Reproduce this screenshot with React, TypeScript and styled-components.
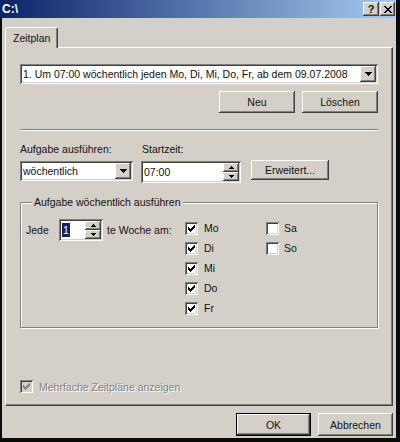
import styled, { createGlobalStyle, css } from 'styled-components';

const GlobalStyle = createGlobalStyle`
  html, body {
    margin: 0;
    padding: 0;
    background: #000;
  }
  body {
    font-family: "Liberation Sans", Arial, sans-serif;
    font-size: 10.5px;
    color: #111;
  }
  * {
    box-sizing: border-box;
  }
`;

const raised = css`
  background: #d4d0c8;
  box-shadow:
    inset -1px -1px #404040,
    inset 1px 1px #fff,
    inset -2px -2px #808080,
    inset 2px 2px #d4d0c8;
`;

const sunken = css`
  background: #fff;
  box-shadow:
    inset 1px 1px #808080,
    inset -1px -1px #fff,
    inset 2px 2px #404040,
    inset -2px -2px #d4d0c8;
`;

const CHECK_ROWS = [2, 3, 4, 3, 2, 1, 0];

const CheckMark = ({ color }: { color: string }) => (
  <svg width='7' height='7' viewBox='0 0 7 7' shapeRendering='crispEdges'>
    {CHECK_ROWS.map((y, x) => (
      <rect key={x} x={x} y={y} width='1' height='3' fill={color} />
    ))}
  </svg>
);

const DownArrow = () => (
  <svg width='7' height='4' viewBox='0 0 7 4' shapeRendering='crispEdges'>
    <rect x='0' y='0' width='7' height='1' fill='#000' />
    <rect x='1' y='1' width='5' height='1' fill='#000' />
    <rect x='2' y='2' width='3' height='1' fill='#000' />
    <rect x='3' y='3' width='1' height='1' fill='#000' />
  </svg>
);

const SpinArrow = ({ up }: { up?: boolean }) => (
  <svg
    width='5'
    height='3'
    viewBox='0 0 5 3'
    shapeRendering='crispEdges'
    style={up ? undefined : { transform: 'scaleY(-1)' }}
  >
    <rect x='2' y='0' width='1' height='1' fill='#000' />
    <rect x='1' y='1' width='3' height='1' fill='#000' />
    <rect x='0' y='2' width='5' height='1' fill='#000' />
  </svg>
);

const CloseGlyph = () => (
  <svg width='8' height='7' viewBox='0 0 8 7' shapeRendering='crispEdges'>
    <path d='M0 0h2v1h-2zM6 0h2v1h-2zM1 1h2v1h-2zM5 1h2v1h-2zM2 2h4v1h-4zM3 3h2v1h-2zM2 4h4v1h-4zM1 5h2v1h-2zM5 5h2v1h-2zM0 6h2v1h-2zM6 6h2v1h-2z' fill='#000' />
  </svg>
);

const Window = styled.div`
  width: 400px;
  height: 442px;
  display: flex;
  flex-direction: column;
  background: #d4d0c8;
  border-right: 4px solid #0a0a0a;
  border-bottom: 4px solid #0a0a0a;
`;

const TitleBar = styled.div`
  height: 18px;
  display: flex;
  align-items: center;
  padding: 0 1px 0 2px;
  background: linear-gradient(to right, #0a246a, #a6caf0);
`;

const Title = styled.div`
  flex: 1;
  color: #fff;
  font-weight: bold;
  font-size: 12px;
`;

const TitleButton = styled.div<{ $w: number }>`
  ${raised};
  width: ${({ $w }) => $w}px;
  height: 14px;
  margin-left: 1px;
  display: flex;
  align-items: center;
  justify-content: center;
  font-weight: bold;
  font-size: 11px;
  line-height: 14px;
`;

const Body = styled.div`
  flex: 1;
  display: flex;
  flex-direction: column;
  padding: 9px 3px 0 3px;
  border-left: 2px solid #0a0a0a;
`;

const TabStrip = styled.div`
  display: flex;
  height: 20px;
`;

const Tab = styled.div`
  position: relative;
  z-index: 1;
  width: 53px;
  height: 21px;
  padding: 4px 0 0 7px;
  background: #d4d0c8;
  border-top: 1px solid #fff;
  border-left: 1px solid #fff;
  border-right: 1px solid #404040;
  border-radius: 2px 2px 0 0;
  box-shadow: inset -1px 0 #808080;
`;

const Panel = styled.div`
  height: 359px;
  display: flex;
  flex-direction: column;
  padding: 16px 0 0 14px;
  border-top: 1px solid #fff;
  border-left: 1px solid #fff;
  border-right: 1px solid #404040;
  border-bottom: 1px solid #404040;
  box-shadow: inset -1px -1px #808080;
`;

const Combo = styled.div<{ $w: number; $h: number }>`
  ${sunken};
  width: ${({ $w }) => $w}px;
  height: ${({ $h }) => $h}px;
  display: flex;
  align-items: center;
  padding: 2px 2px 2px 3px;
`;

const FieldText = styled.div`
  flex: 1;
  white-space: nowrap;
  overflow: hidden;
`;

const DropButton = styled.div`
  ${raised};
  width: 16px;
  height: 100%;
  display: flex;
  align-items: center;
  justify-content: center;
`;

const Button = styled.div<{ $w: number; $h?: number; $default?: boolean }>`
  ${raised};
  width: ${({ $w }) => $w}px;
  height: ${({ $h }) => $h ?? 22}px;
  display: flex;
  align-items: center;
  justify-content: center;
  ${({ $default }) =>
    $default &&
    css`
      border: 1px solid #000;
    `}
`;

const ButtonRow = styled.div`
  width: 358px;
  margin-top: 7px;
  display: flex;
  justify-content: flex-end;
  gap: 7px;
`;

const Separator = styled.div`
  width: 358px;
  margin-top: 16px;
  border-top: 1px solid #808080;
  border-bottom: 1px solid #fff;
`;

const LabelRow = styled.div`
  margin-top: 12px;
  display: flex;
  line-height: 13px;
`;

const FieldLabel = styled.div<{ $w?: number }>`
  width: ${({ $w }) => ($w ? `${$w}px` : 'auto')};
`;

const ControlRow = styled.div`
  margin-top: 5px;
  display: flex;
  align-items: flex-start;
`;

const SpinBox = styled.div<{ $w: number }>`
  ${sunken};
  width: ${({ $w }) => $w}px;
  height: 22px;
  margin-left: ${({ $w }) => ($w > 60 ? 8 : 0)}px;
  display: flex;
  align-items: center;
  padding: 2px 2px 2px 3px;
`;

const SpinButtons = styled.div`
  width: 16px;
  height: 100%;
  display: flex;
  flex-direction: column;
`;

const SpinPart = styled.div`
  ${raised};
  flex: 1;
  display: flex;
  align-items: center;
  justify-content: center;
`;

const Selected = styled.span`
  display: inline-block;
  height: 14px;
  line-height: 14px;
  background: #0a246a;
  color: #fff;
  padding: 0 1px;
`;

const GroupBox = styled.fieldset`
  width: 358px;
  height: 132px;
  margin: 13px 0 0 0;
  padding: 10px 0 0 5px;
  border: 1px solid #808080;
  box-shadow: inset 1px 1px #fff, 1px 1px #fff;
  display: flex;
  align-items: flex-start;
`;

const Legend = styled.legend`
  margin-left: 6px;
  padding: 0 2px;
  line-height: 13px;
  background: #d4d0c8;
`;

const GroupInner = styled.div`
  display: flex;
  align-items: flex-start;
`;

const EveryRow = styled.div`
  width: 159px;
  display: flex;
  align-items: center;
`;

const EveryLabel = styled.div`
  width: 33px;
`;

const WeekLabel = styled.div`
  margin-left: 4px;
`;

const DayColumn = styled.div<{ $w: number }>`
  width: ${({ $w }) => $w}px;
  display: flex;
  flex-direction: column;
  margin-top: -1px;
`;

const CheckRow = styled.div<{ $gap: number }>`
  height: 20px;
  display: flex;
  align-items: center;
  gap: ${({ $gap }) => $gap}px;
`;

const CheckBox = styled.div<{ $disabled?: boolean }>`
  width: 13px;
  height: 13px;
  flex: none;
  display: flex;
  align-items: center;
  justify-content: center;
  ${sunken};
  background: ${({ $disabled }) => ($disabled ? '#d4d0c8' : '#fff')};
`;

const MultiRow = styled.div`
  margin-top: auto;
  margin-bottom: 12px;
  height: 13px;
  display: flex;
  align-items: center;
  gap: 6px;
`;

const DisabledText = styled.div`
  color: #808080;
  text-shadow: 1px 1px #fff;
`;

const Footer = styled.div`
  margin-top: 7px;
  display: flex;
  justify-content: flex-end;
  gap: 7px;
`;

const DAYS_LEFT = ['Mo', 'Di', 'Mi', 'Do', 'Fr'];
const DAYS_RIGHT = ['Sa', 'So'];

const App = () => {
  return (
    <>
      <GlobalStyle />
      <Window>
        <TitleBar>
          <Title>C:\</Title>
          <TitleButton $w={16}>?</TitleButton>
          <TitleButton $w={15}>
            <CloseGlyph />
          </TitleButton>
        </TitleBar>

        <Body>
          <TabStrip>
            <Tab>Zeitplan</Tab>
          </TabStrip>

          <Panel>
            <Combo $w={358} $h={20}>
              <FieldText>1. Um 07:00 wöchentlich jeden Mo, Di, Mi, Do, Fr, ab dem 09.07.2008</FieldText>
              <DropButton>
                <DownArrow />
              </DropButton>
            </Combo>

            <ButtonRow>
              <Button $w={76}>Neu</Button>
              <Button $w={76}>Löschen</Button>
            </ButtonRow>

            <Separator />

            <LabelRow>
              <FieldLabel $w={122}>Aufgabe ausführen:</FieldLabel>
              <FieldLabel>Startzeit:</FieldLabel>
            </LabelRow>

            <ControlRow>
              <Combo $w={113} $h={20}>
                <FieldText>wöchentlich</FieldText>
                <DropButton>
                  <DownArrow />
                </DropButton>
              </Combo>
              <SpinBox $w={100}>
                <FieldText>07:00</FieldText>
                <SpinButtons>
                  <SpinPart><SpinArrow up /></SpinPart>
                  <SpinPart><SpinArrow /></SpinPart>
                </SpinButtons>
              </SpinBox>
              <Button $w={78} $h={20} style={{ marginLeft: 10, marginTop: -1 }}>
                Erweitert...
              </Button>
            </ControlRow>

            <GroupBox>
              <Legend>Aufgabe wöchentlich ausführen</Legend>
              <GroupInner>
                <EveryRow>
                  <EveryLabel>Jede</EveryLabel>
                  <SpinBox $w={44}>
                    <FieldText><Selected>1</Selected></FieldText>
                    <SpinButtons>
                      <SpinPart><SpinArrow up /></SpinPart>
                      <SpinPart><SpinArrow /></SpinPart>
                    </SpinButtons>
                  </SpinBox>
                  <WeekLabel>te Woche am:</WeekLabel>
                </EveryRow>

                <DayColumn $w={81}>
                  {DAYS_LEFT.map((day) => (
                    <CheckRow key={day} $gap={6}>
                      <CheckBox><CheckMark color='#000' /></CheckBox>
                      {day}
                    </CheckRow>
                  ))}
                </DayColumn>

                <DayColumn $w={60}>
                  {DAYS_RIGHT.map((day) => (
                    <CheckRow key={day} $gap={5}>
                      <CheckBox />
                      {day}
                    </CheckRow>
                  ))}
                </DayColumn>
              </GroupInner>
            </GroupBox>

            <MultiRow>
              <CheckBox $disabled><CheckMark color='#808080' /></CheckBox>
              <DisabledText>Mehrfache Zeitpläne anzeigen</DisabledText>
            </MultiRow>
          </Panel>

          <Footer>
            <Button $w={75} $h={23} $default>OK</Button>
            <Button $w={75} $h={23}>Abbrechen</Button>
          </Footer>
        </Body>
      </Window>
    </>
  );
};

export default App;
